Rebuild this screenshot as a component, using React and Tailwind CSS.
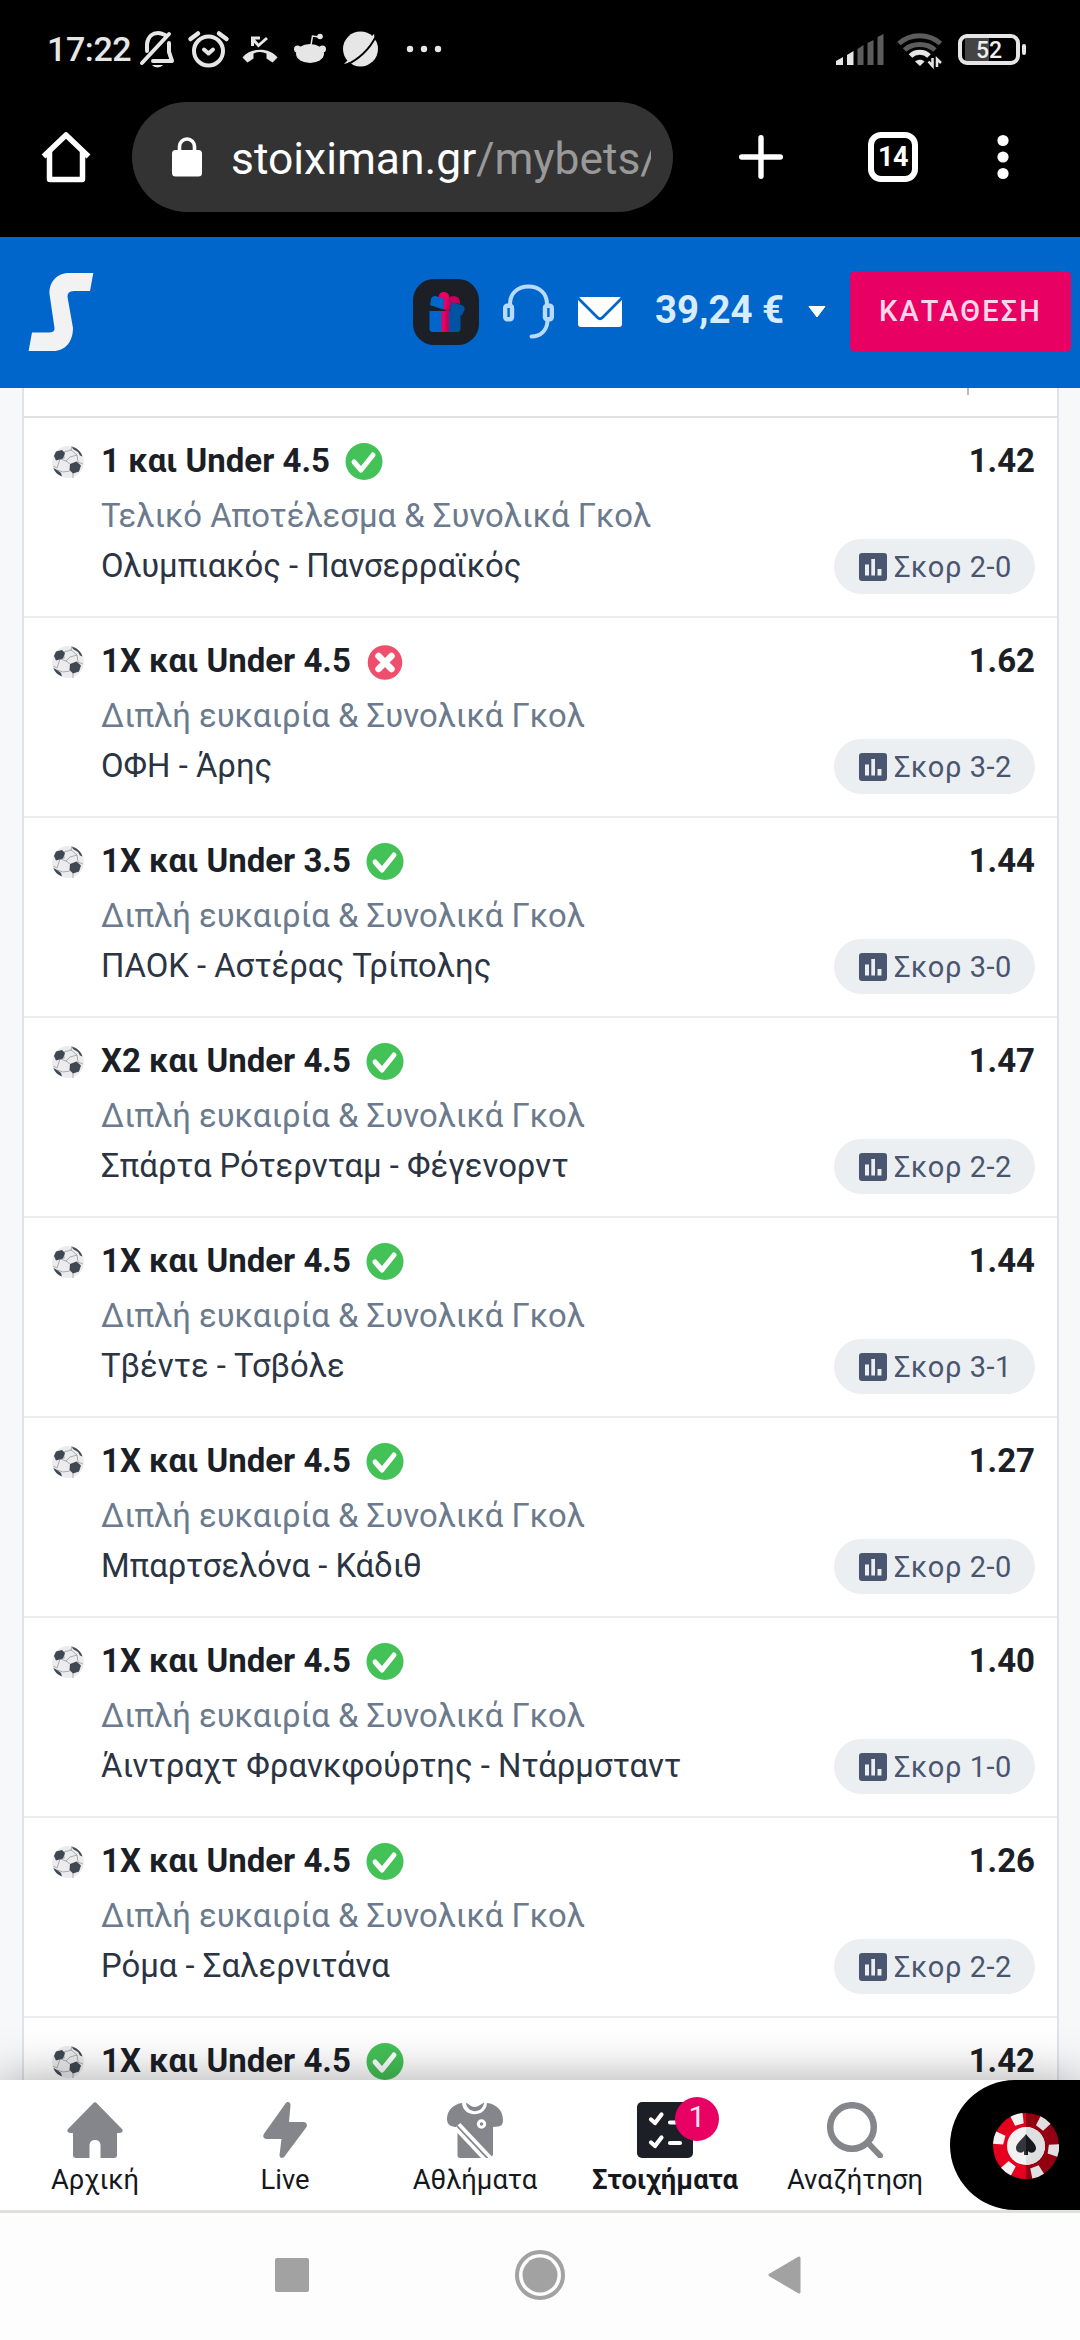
import React from "react";

const bets = [
  ["1 και Under 4.5", true, "1.42", "Τελικό Αποτέλεσμα & Συνολικά Γκολ", "Ολυμπιακός - Πανσερραϊκός", "2-0"],
  ["1X και Under 4.5", false, "1.62", "Διπλή ευκαιρία & Συνολικά Γκολ", "ΟΦΗ - Άρης", "3-2"],
  ["1X και Under 3.5", true, "1.44", "Διπλή ευκαιρία & Συνολικά Γκολ", "ΠΑΟΚ - Αστέρας Τρίπολης", "3-0"],
  ["X2 και Under 4.5", true, "1.47", "Διπλή ευκαιρία & Συνολικά Γκολ", "Σπάρτα Ρότερνταμ - Φέγενορντ", "2-2"],
  ["1X και Under 4.5", true, "1.44", "Διπλή ευκαιρία & Συνολικά Γκολ", "Τβέντε - Τσβόλε", "3-1"],
  ["1X και Under 4.5", true, "1.27", "Διπλή ευκαιρία & Συνολικά Γκολ", "Μπαρτσελόνα - Κάδιθ", "2-0"],
  ["1X και Under 4.5", true, "1.40", "Διπλή ευκαιρία & Συνολικά Γκολ", "Άιντραχτ Φρανκφούρτης - Ντάρμσταντ", "1-0"],
  ["1X και Under 4.5", true, "1.26", "Διπλή ευκαιρία & Συνολικά Γκολ", "Ρόμα - Σαλερνιτάνα", "2-2"],
  ["1X και Under 4.5", true, "1.42", "", "", ""],
];

function StatusIcons() {
  return (
    <svg className="ml-[8px] h-[44px] w-[304px] shrink-0" viewBox="138 27 304 44" fill="none">
      {/* muted bell */}
      <g stroke="#e6e6e6" strokeWidth="4" strokeLinecap="round" strokeLinejoin="round">
        <path d="M142 63L169 34" />
        <path d="M147 51V44C148 36 153 33 158 33C161 33 163 34 165 35" />
        <path d="M169 43V52L172 61H153" />
      </g>
      <path d="M152 65h11a6 4 0 0 1-11 0z" fill="#e6e6e6" />
      {/* alarm */}
      <g stroke="#e6e6e6" strokeWidth="4" strokeLinecap="round" strokeLinejoin="round">
        <circle cx="208.500" cy="51" r="14.500" />
        <path d="M190.500 39L198 33.500M226.500 39L219 33.500" strokeWidth="4.500" />
        <path d="M204 49.500L208.500 53.500L213 49.500" />
      </g>
      {/* missed call */}
      <path d="M242.500 57.500C250 47 270 47 277.500 57.500L272.500 62.500L266.500 58.500V53.500C262 51.500 258 51.500 253.500 53.500V58.500L247.500 62.500Z" fill="#e6e6e6" />
      <path d="M267 38L258.500 45.500L253 39.500M252.500 46V38H260" stroke="#e6e6e6" strokeWidth="3" />
      {/* reddit */}
      <g fill="#e6e6e6">
        <ellipse cx="310" cy="53.500" rx="14" ry="9.500" />
        <circle cx="297.500" cy="49" r="3.500" />
        <circle cx="322.500" cy="49" r="3.500" />
        <circle cx="320" cy="36.500" r="2.800" />
      </g>
      <path d="M311 45L312.500 36L319 37" stroke="#e6e6e6" strokeWidth="1.500" />
      {/* planet */}
      <circle cx="360.500" cy="49" r="17.500" fill="#e6e6e6" />
      <path d="M344 64L374 34L375 39L348 63Z" fill="#e6e6e6" />
      <path d="M346 65C358 60 370 49 376 36" stroke="#000" strokeWidth="1.800" />
      {/* overflow dots */}
      <g fill="#e6e6e6">
        <circle cx="410" cy="49" r="3.200" />
        <circle cx="424" cy="49" r="3.200" />
        <circle cx="438" cy="49" r="3.200" />
      </g>
    </svg>
  );
}

function Connectivity() {
  return (
    <svg className="h-[40px] w-[110px] shrink-0" viewBox="834 29 110 40" fill="none">
      <path d="M835 65V61L842 57V65ZM846 65V55L852.500 51V65Z" fill="#e6e6e6" />
      <path d="M856.500 65V49L862.500 45V65ZM866.500 65V43L872.500 40V65ZM876.500 65V37L882.500 34V65Z" fill="#5c5c5c" />
      <g strokeWidth="5">
        <path d="M898 43.500C909 33 928 33 939.500 43.500" stroke="#5c5c5c" />
        <path d="M903.500 50C911.500 42.500 926 42.500 934 50" stroke="#5c5c5c" />
        <path d="M909.500 56C914.500 51 923 51 928 56" stroke="#e6e6e6" />
      </g>
      <path d="M914 61.500C917 59 921 59 923.500 61.500L919 66Z" fill="#e6e6e6" />
      <path d="M931.500 58V66L927.500 61.500M936 67V59L940 63" stroke="#e6e6e6" strokeWidth="2.500" />
    </svg>
  );
}

function Ball() {
  return (
    <svg className="h-[34px] w-[34px]" viewBox="0 0 34 34">
      <circle cx="17" cy="17" r="16" fill="#ececee" />
      <g stroke="#8b9097" strokeWidth=".7" fill="none">
        <path d="M13 7L20 5L26 10L27 17M9 14L6 23M9 14L15 16L19 19M13 9L13 14M19 26L12 27L6 25M22 28L22 33M27 17L32 19M20 5L21 1M15 16L19 12L26 10M6 23L2 21" />
      </g>
      <g fill="#3f4852">
        <path d="M5 6.500L11 5L14 8L12 13.500L5 15.500L3 11Z" />
        <path d="M19 19L25.500 16.500L30 20.500L28 26.500L22 28.500L18.500 25Z" />
        <path d="M21 1.800C26 3 30 6.500 31.500 11.500L29 10.500L27 7L22 4Z" />
        <path d="M2.500 23L6 25L10 28L11 31.500C7 30 3.500 27 2.500 23Z" />
      </g>
    </svg>
  );
}

function Result({ won }) {
  return won ? (
    <svg className="ml-[15px] h-[38px] w-[38px]" viewBox="0 0 38 38">
      <circle cx="19" cy="19.500" r="18.500" fill="#44c157" />
      <path d="M9 20L16 28L28 13" fill="none" stroke="#fff" strokeWidth="5" strokeLinecap="round" strokeLinejoin="round" />
    </svg>
  ) : (
    <svg className="ml-[15px] h-[38px] w-[38px]" viewBox="0 0 38 38">
      <circle cx="19" cy="20.500" r="17.300" fill="#ee4f6c" />
      <path d="M12.500 14L25.500 27M25.500 14L12.500 27" fill="none" stroke="#fff" strokeWidth="6.500" strokeLinecap="round" />
    </svg>
  );
}

function BetRow({ bet }) {
  const [pick, won, odds, market, match, score] = bet;
  return (
    <div className="flex h-[200px] shrink-0 border-b-2 border-[#ebedf0] pr-[22px] pl-[27px]">
      <div className="mt-[27px] w-[50px] shrink-0">
        <Ball />
      </div>
      <div className="min-w-0 flex-1 pt-[23px] whitespace-nowrap">
        <div className="flex h-[40px] items-center">
          <span className="text-[33px] leading-[40px] font-bold text-[#1c1f26]">{pick}</span>
          <Result won={won} />
        </div>
        <div className="mt-[15px] text-[32.85px] leading-[40px] text-[#6b7a8c]">{market}</div>
        <div className="mt-[10px] text-[32.85px] leading-[40px] text-[#2b3442]">{match}</div>
      </div>
      <div className="flex flex-col items-end pt-[23px]">
        <span className="text-[33px] leading-[40px] font-bold text-[#1c1f26]">{odds}</span>
        {score && (
          <div className="mt-[58px] flex h-[55px] w-[201px] items-center rounded-full bg-[#ebeff2] pl-[25px]">
            <svg className="h-[28px] w-[28px]" viewBox="0 0 28 28">
              <rect width="28" height="28" rx="3" fill="#4a5670" />
              <path d="M6 11.500H10V22.500H6ZM12.300 6H16V22.500H12.300ZM18.500 16H22.500V22.500H18.500Z" fill="#ebeff2" />
            </svg>
            <span className="ml-[7px] text-[29px] leading-[40px] tracking-[0.55px] whitespace-nowrap text-[#4a5670]">Σκορ {score}</span>
          </div>
        )}
      </div>
    </div>
  );
}

function NavItem({ label, bold, children }) {
  return (
    <div className="relative flex w-[190px] shrink-0 flex-col items-center pt-[22px]">
      {children}
      <span className={bold ? "mt-[5px] text-[27.4px] leading-[34px] font-bold whitespace-nowrap text-[#16181d]" : "mt-[5px] text-[27.4px] leading-[34px] whitespace-nowrap text-[#16181d]"}>{label}</span>
    </div>
  );
}

function Chip() {
  const marks = [-17, 37, 98, 158, 218, 285];
  return (
    <svg className="mt-[2px] h-[68px] w-[68px]" viewBox="-34 -34 68 68">
      <path d="M0 -33A33 33 0 0 0 0 33Z" fill="#e6001f" />
      <path d="M0 -33A33 33 0 0 1 0 33Z" fill="#930012" />
      {marks.map((a, i) => (
        <path key={a} d="M-6.300 -32.500Q0 -34 6.300 -32.500L4.500 -22.500H-4.500Z" transform={`rotate(${a})`} fill={i < 4 && i > 0 ? "#e0e0e2" : "#f2f2f2"} />
      ))}
      <circle r="19" fill="#f2f2f2" />
      <path d="M0 -19A19 19 0 0 1 0 19Z" fill="#dfdfe2" />
      <path d="M0 -12C-3 -7 -10 -3 -10 2C-10 7 -4 8 -2 5V9H0Z" fill="#34353c" />
      <path d="M0 -12C3 -7 10 -3 10 2C10 7 4 8 2 5V9H0Z" fill="#17181c" />
    </svg>
  );
}

export default function App() {
  return (
    <div className="flex h-[2340px] w-[1080px] flex-col overflow-hidden bg-white font-['Roboto',sans-serif]">
      <div className="h-[237px] shrink-0 bg-black">
        <div className="flex h-[98px] items-center pl-[47px]">
          <span className="w-[83px] shrink-0 text-[34px] leading-[40px] font-medium tracking-[-0.4px] whitespace-nowrap text-[#e6e6e6]">17:22</span>
          <StatusIcons />
          <div className="ml-auto flex items-center pr-[54px]">
            <Connectivity />
            <div className="ml-[13px] flex h-[31px] w-[62px] items-center justify-center rounded-[9px] border-4 border-[#e6e6e6] bg-[linear-gradient(90deg,#000_3px,#444_3px,#444_27px,#000_27px)] pt-[2px] text-[23px] leading-none font-medium text-[#f0f0f0]">52</div>
            <div className="ml-[2px] h-[11px] w-[4px] rounded-full bg-[#e6e6e6]" />
          </div>
        </div>
        <div className="mt-[4px] flex h-[110px] items-center pl-[40px]">
          <svg className="h-[52px] w-[52px] shrink-0" viewBox="40 131 52 52" fill="none">
            <path d="M43.500 156.500L66 135L88.500 156.500M49.500 152V179Q49.500 179.500 50 179.500H82Q82.500 179.500 82.500 179V152" stroke="#fff" strokeWidth="5.500" strokeLinejoin="round" />
          </svg>
          <div className="ml-[40px] flex h-[110px] w-[541px] shrink-0 items-center rounded-full bg-[#333] pl-[40px]">
            <svg className="h-[40px] w-[30px]" viewBox="0 0 30 40">
              <rect y="13" width="30" height="26.500" rx="3.500" fill="#fff" />
              <path d="M7.500 15V9.500a7.500 7.500 0 0 1 15 0V15" fill="none" stroke="#fff" strokeWidth="3.600" />
            </svg>
            <div className="ml-[29px] w-[420px] overflow-hidden pt-[4px] text-[44.4px] leading-[56px] whitespace-nowrap text-white">stoiximan.gr<span className="text-[#999]">/mybets/</span></div>
          </div>
          <svg className="ml-[66px] h-[44px] w-[44px]" viewBox="0 0 44 44">
            <path d="M22 2.700V41.300M2.700 22H41.300" stroke="#fff" strokeWidth="5.400" strokeLinecap="round" />
          </svg>
          <div className="ml-[85px] flex h-[50px] w-[50px] items-center justify-center rounded-[13px] border-[6px] border-white text-[27px] leading-none font-bold tracking-[-0.5px] text-white">14</div>
          <svg className="ml-[79px] h-[46px] w-[12px]" viewBox="0 0 12 46" fill="#fff">
            <circle cx="6" cy="6.500" r="5.600" />
            <circle cx="6" cy="23" r="5.600" />
            <circle cx="6" cy="39.500" r="5.600" />
          </svg>
        </div>
      </div>

      <header className="flex h-[151px] shrink-0 items-center bg-[#0066cc] pb-[2px] pl-[28px]">
        <svg className="h-[78px] w-[66px]" viewBox="28 273 66 78">
          <path d="M93.300 273H69C56 273 49 283 49.500 294L54.500 328Q55 332.500 48.500 332.500H32L28.600 351H53C66 351 73 341 73 328L67.500 297Q67 291 74 291H90Z" fill="#f2f2f2" />
        </svg>
        <svg className="ml-[319px] h-[66px] w-[66px]" viewBox="413 278 66 66">
          <rect x="413" y="278" width="66" height="66" rx="21" fill="#1c1f26" />
          <path d="M429.500 310H442V331H432.500a3 3 0 0 1-3-3Z" fill="#0066cc" />
          <path d="M448 310H460.500V328a3 3 0 0 1-3 3H448Z" fill="#0052a3" />
          <path d="M439 296C438 289.500 448 289.500 449 294.500V310L441.500 307.500Z" fill="#e80062" />
          <path d="M441.500 310H448V331H441.500Z" fill="#e80062" />
          <path d="M448 297.500C453 292.500 461 295.500 460 303L452 301.500L449 310V331H445.500V310Z" fill="#c4005a" />
          <path d="M430 304L431 298Q432.500 294 436.500 295.300L444 298L443.500 308.500L431 304.500Z" fill="#0066cc" />
          <path d="M451.500 301L461.500 304Q465.500 305.500 464.500 309L462 314.500L449.500 310.500Z" fill="#0052a3" />
        </svg>
        <svg className="ml-[22px] h-[56px] w-[54px]" viewBox="501 284 54 56" fill="none" stroke="#b8dafc" strokeWidth="4" strokeLinecap="round">
          <path d="M510 304C510 293 518 286.500 528.500 286.500C539 286.500 547 293 547 304" />
          <rect x="505.200" y="305.700" width="6.800" height="13.500" rx="2" strokeWidth="4.400" />
          <rect x="545" y="305.700" width="6.800" height="13.500" rx="2" strokeWidth="4.400" />
          <path d="M547.500 321C547 330 541 336.500 531.500 336.500" />
        </svg>
        <svg className="ml-[23px] h-[30px] w-[44px]" viewBox="0 0 44 30">
          <rect width="44" height="30" rx="3" fill="#fff" />
          <path d="M0 1L19.500 20.500Q22 23 24.500 20.500L44 1" fill="none" stroke="#0066cc" strokeWidth="2.800" />
        </svg>
        <span className="ml-[33px] w-[130px] text-[38.4px] leading-[44px] font-bold whitespace-nowrap text-[#d9ecff] -mt-[3px]">39,24 €</span>
        <svg className="ml-[23px] h-[12px] w-[18px]" viewBox="0 0 18 12">
          <path d="M1 .5H17L9 11Z" fill="#fff" stroke="#fff" strokeLinejoin="round" />
        </svg>
        <div className="ml-[24px] flex h-[81px] w-[221px] items-center justify-center rounded-[5px] bg-[#e80062] text-[29px] leading-none font-medium tracking-[2.1px] whitespace-nowrap text-[#ffd6e8]">ΚΑΤΑΘΕΣΗ</div>
      </header>

      <main className="h-[1692px] shrink-0 overflow-hidden bg-[#f7f8fa] pr-[21px] pl-[22px]">
        <div className="flex flex-col border-x-2 border-[#dfe2e8] bg-white">
          <div className="flex h-[30px] shrink-0 justify-end border-b-2 border-[#dfe1e6] pr-[88px]">
            <div className="h-[7px] w-[2px] bg-[#b4bac4]" />
          </div>
          {bets.map((b, i) => (
            <BetRow key={i} bet={b} />
          ))}
        </div>
      </main>

      <nav className="relative flex h-[130px] shrink-0 bg-white shadow-[0_0_50px_rgba(0,0,0,0.35)]">
        <NavItem label="Αρχική">
          <svg className="h-[56px] w-[56px]" viewBox="0 0 56 56" fill="#85868b">
            <path d="M26 1.500Q28 -1 30 1.500L55 27Q57 30.500 53 31H50V53Q50 56 47 56H33.500V43Q33 38 28 38Q23 38 22.500 43V56H9Q6 56 6 53V31H3Q-1 30.500 1 27Z" />
          </svg>
        </NavItem>
        <NavItem label="Live">
          <svg className="h-[56px] w-[44px]" viewBox="0 0 44 56" fill="#85868b">
            <path d="M22.500 1.500C24.500 -1 27.500 0 27.500 3L26 20H41Q45 21 43.500 25L21.500 54.500C19.500 57 16.500 56 16.500 53L18.500 37H3Q-1 36 .8 32Z" />
          </svg>
        </NavItem>
        <NavItem label="Αθλήματα">
          <svg className="h-[56px] w-[56px]" viewBox="0 0 56 56" fill="none">
            <path d="M15 1C16 16 39 16 40 1C49 2 56 8 56 18Q56 24 51 24.500L46 25V53L43 56H13Q10.500 56 10.500 53V25C4 25 0 23 0 17C0 8 7 2 15 1Z" fill="#85868b" />
            <path d="M19 .5L24 4Q27.500 6 31.500 4L37 .5C36 12 20 12 19 .5Z" fill="#85868b" />
            <path d="M10 24L43 59" stroke="#fff" strokeWidth="9" />
            <path d="M10 24L43 59" stroke="#85868b" strokeWidth="1.800" />
            <circle cx="34.500" cy="22" r="3.200" stroke="#fff" strokeWidth="3" />
          </svg>
        </NavItem>
        <NavItem label="Στοιχήματα" bold>
          <svg className="h-[56px] w-[56px]" viewBox="0 0 56 56" fill="none">
            <rect width="56" height="56" rx="5" fill="#1c1f26" />
            <path d="M14 17.500L18 21L24.500 12.500M14 40.500L18 44L24.500 35.500M33 20.500H42M33 41H43" stroke="#fff" strokeWidth="4.200" strokeLinecap="round" strokeLinejoin="round" />
          </svg>
          <div className="absolute top-[17px] left-[105px] flex h-[44px] w-[44px] items-center justify-center rounded-full bg-[#e80062] pb-[4px] text-[30px] leading-none text-[#ffe3ef]">1</div>
        </NavItem>
        <NavItem label="Αναζήτηση">
          <svg className="h-[56px] w-[56px]" viewBox="0 0 56 56" fill="none" stroke="#85868b">
            <circle cx="25" cy="25" r="21.800" strokeWidth="6.500" />
            <path d="M41 41L53 53.500" strokeWidth="6" strokeLinecap="round" />
          </svg>
        </NavItem>
        <div className="flex h-[130px] flex-1 items-center rounded-l-full bg-black pl-[42px]">
          <Chip />
        </div>
      </nav>

      <div className="relative flex h-[130px] shrink-0 items-center border-t-[3px] border-[#dfe1df] bg-[#fdfdfd] pb-[3px] pl-[275px]">
        <div className="h-[34px] w-[34px] rounded-[2px] bg-[#a2a2a2]" />
        <svg className="ml-[206px] h-[50px] w-[50px]" viewBox="0 0 50 50">
          <circle cx="25" cy="25" r="23" fill="none" stroke="#a2a2a2" strokeWidth="4" />
          <circle cx="25" cy="25" r="17.500" fill="#a2a2a2" />
        </svg>
        <svg className="ml-[203px] h-[38px] w-[33px]" viewBox="0 0 33 38">
          <path d="M31 2V36L2 19Z" fill="#a2a2a2" stroke="#a2a2a2" strokeWidth="3" strokeLinejoin="round" />
        </svg>
      </div>
    </div>
  );
}
